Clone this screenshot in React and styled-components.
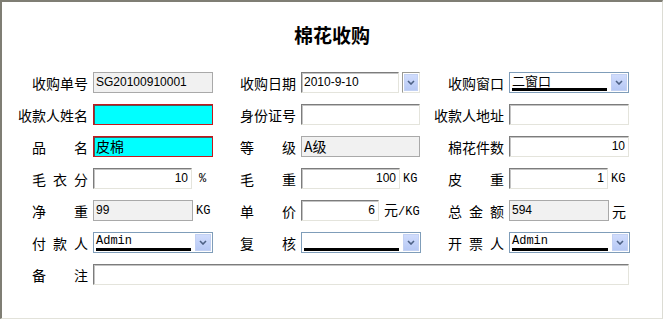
import React from 'react';
import styled, { createGlobalStyle, css } from 'styled-components';

const Global = createGlobalStyle`
  html, body { margin: 0; padding: 0; background: #fff; }
  body { font-family: "Noto Sans CJK SC", "Liberation Sans", sans-serif; }
`;

const Frame = styled.div`
  box-sizing: border-box;
  width: 663px;
  height: 319px;
  border-top: 2px solid #7f7e74;
  border-left: 2px solid #7f7e74;
  border-right: 1px solid #dcdcd4;
  border-bottom: 1px solid #e2e2da;
  background: #fff;
`;

const Title = styled.h1`
  margin: 0;
  padding: 24px 0 0 0;
  text-align: center;
  font-size: 19px;
  line-height: 18px;
  font-weight: 700;
  color: #000;
  font-family: "Noto Sans CJK SC", sans-serif;
`;

const Form = styled.div`
  margin: 28px 0 0 6px;
  display: grid;
  grid-template-columns: 80px 127px 71px 124px 74px 123px;
  grid-auto-rows: 21px;
  column-gap: 5px;
  row-gap: 11px;
`;

const LabelCell = styled.div`
  display: flex;
  align-items: center;
  justify-content: flex-end;
`;

const LabelText = styled.span`
  display: inline-block;
  min-width: 56px;
  text-align: justify;
  text-align-last: justify;
  text-justify: inter-character;
  font-size: 14px;
  line-height: 14px;
  color: #000;
  white-space: nowrap;
`;

const Field = styled.div`
  display: flex;
  align-items: center;
  gap: 3px;
  ${p => p.$span && css`grid-column: 2 / span 5;`}
`;

const variants = {
  inset: css`
    background: #fff;
    border: 1px solid;
    border-color: #7c7c7c #e4e4dc #e4e4dc #7c7c7c;
    box-shadow: inset 1px 1px 0 #c4c4c4;
  `,
  readonly: css`
    background: #f1f1f1;
    border: 1px solid #a9a9a9;
  `,
  required: css`
    background: #00ffff;
    border: 1px solid #c41a1e;
    box-shadow: inset 1px 1px 0 #555;
  `,
};

const Box = styled.input`
  box-sizing: border-box;
  width: ${p => p.$w}px;
  height: 21px;
  margin: 0;
  padding: 0 3px 2px 2px;
  outline: none;
  color: #000;
  font-family: ${p => (p.$cjk ? '"Noto Sans CJK SC", sans-serif' : '"Liberation Sans", sans-serif')};
  font-size: ${p => (p.$cjk ? 14 : 12)}px;
  text-align: ${p => (p.$right ? 'right' : 'left')};
  ${p => variants[p.$kind || 'inset']}
`;

const Unit = styled.span`
  font-family: ${p => (p.$cjk ? '"Noto Sans CJK SC", sans-serif' : '"Liberation Mono", monospace')};
  font-size: ${p => (p.$cjk ? 14 : 12)}px;
  line-height: 14px;
  color: #000;
  padding-left: ${p => p.$pad || 0}px;
  white-space: nowrap;
`;

const Combo = styled.div`
  box-sizing: border-box;
  width: ${p => p.$w}px;
  height: 21px;
  border: 1px solid #7f9db9;
  background: #fff;
  display: flex;
  padding: 1px;
`;

const ComboValue = styled.div`
  flex: 1;
  margin: 0 4px 0 1px;
  border-bottom: 3px solid #000;
  display: flex;
  align-items: flex-end;
  font-family: ${p => (p.$cjk ? '"Noto Sans CJK SC", sans-serif' : '"Liberation Mono", monospace')};
  font-size: ${p => (p.$cjk ? 13 : 12)}px;
  line-height: 14px;
  color: #000;
  white-space: nowrap;
`;

const DropBtn = styled.div`
  box-sizing: border-box;
  width: ${p => p.$w || 16}px;
  background: linear-gradient(#d0dcfc, #b7c9f5);
  border: 1px solid #c3d1f3;
  display: flex;
  align-items: center;
  justify-content: center;
`;

const DateBtnFrame = styled.div`
  box-sizing: border-box;
  width: 18px;
  height: 21px;
  border: 1px solid;
  border-color: #9a9a94 #e6e6de #e6e6de #9a9a94;
  display: flex;
  padding: 1px;
`;

const Chevron = () => (
  <svg width="8" height="5" viewBox="0 0 8 5">
    <path d="M1 1 L4 4 L7 1" fill="none" stroke="#4d6185" strokeWidth="1.6" />
  </svg>
);

const Label = ({ children }) => (
  <LabelCell>
    <LabelText>{children}</LabelText>
  </LabelCell>
);

const Select = ({ w = 120, value, cjk }) => (
  <Combo $w={w}>
    <ComboValue $cjk={cjk}>{value}</ComboValue>
    <DropBtn>
      <Chevron />
    </DropBtn>
  </Combo>
);

const T = ({ w = 120, kind, value = '', right, cjk }) => (
  <Box $w={w} $kind={kind} $right={right} $cjk={cjk} value={value} readOnly />
);

export default function App() {
  return (
    <>
      <Global />
      <Frame>
        <Title>棉花收购</Title>
        <Form>
          <Label>收购单号</Label>
          <Field><T kind="readonly" value="SG20100910001" /></Field>
          <Label>收购日期</Label>
          <Field>
            <T w={98} value="2010-9-10" />
            <DateBtnFrame>
              <DropBtn $w={14}>
                <Chevron />
              </DropBtn>
            </DateBtnFrame>
          </Field>
          <Label>收购窗口</Label>
          <Field><Select value="二窗口" cjk /></Field>

          <Label>收款人姓名</Label>
          <Field><T kind="required" /></Field>
          <Label>身份证号</Label>
          <Field><T w={119} /></Field>
          <Label>收款人地址</Label>
          <Field><T /></Field>

          <Label>品　名</Label>
          <Field><T kind="required" value="皮棉" cjk /></Field>
          <Label>等　级</Label>
          <Field><T w={119} kind="readonly" value="A级" cjk /></Field>
          <Label>棉花件数</Label>
          <Field><T value="10" right /></Field>

          <Label>毛衣分</Label>
          <Field><T w={99} value="10" right /><Unit $pad={4}>%</Unit></Field>
          <Label>毛　重</Label>
          <Field><T w={99} value="100" right /><Unit>KG</Unit></Field>
          <Label>皮　重</Label>
          <Field><T w={99} value="1" right /><Unit>KG</Unit></Field>

          <Label>净　重</Label>
          <Field><T w={100} kind="readonly" value="99" /><Unit>KG</Unit></Field>
          <Label>单　价</Label>
          <Field><T w={78} value="6" right /><Unit $pad={2}><Unit $cjk>元</Unit>/KG</Unit></Field>
          <Label>总金额</Label>
          <Field><T w={100} kind="readonly" value="594" /><Unit $cjk>元</Unit></Field>

          <Label>付款人</Label>
          <Field><Select value="Admin" /></Field>
          <Label>复　核</Label>
          <Field><Select value="" /></Field>
          <Label>开票人</Label>
          <Field><Select w={121} value="Admin" /></Field>

          <Label>备　注</Label>
          <Field $span><T w={536} /></Field>
        </Form>
      </Frame>
    </>
  );
}
